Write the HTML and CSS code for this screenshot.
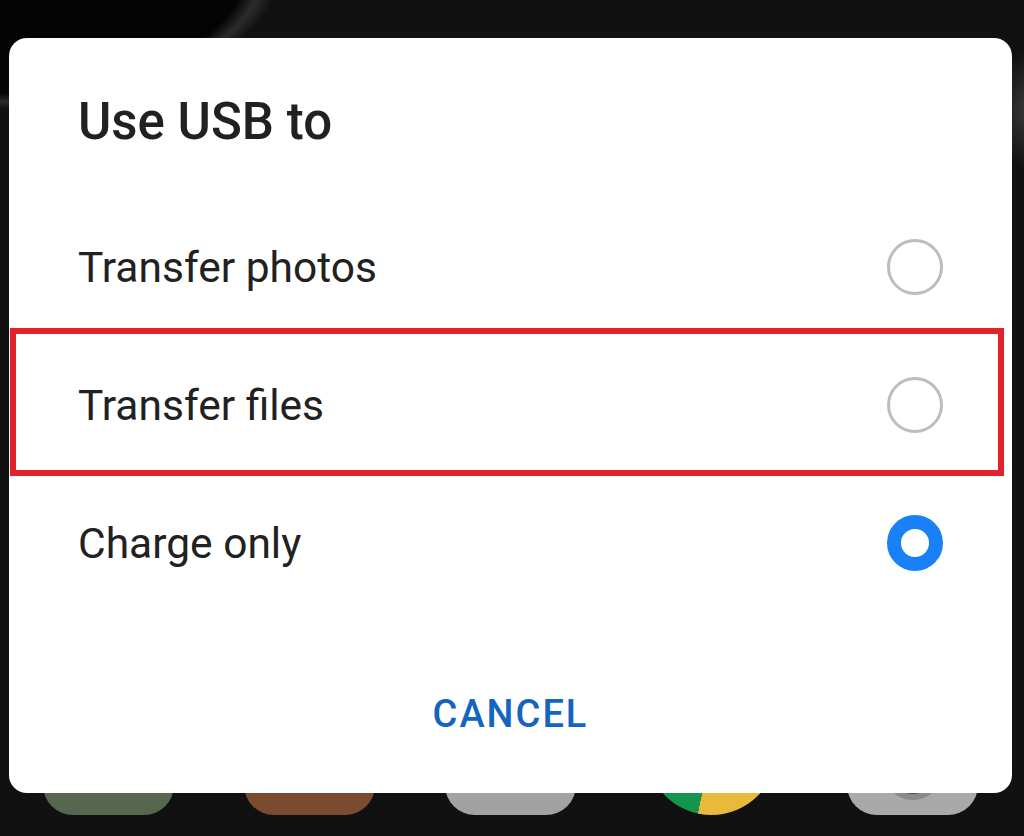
FILE: index.html
```html
<!DOCTYPE html>
<html lang="en">

<head>
    <meta charset="UTF-8">
    <meta name="viewport" content="width=device-width, initial-scale=1.0">
    <title>Use USB to</title>
    <link rel="stylesheet" href="styles.css">
</head>

<body>
    <main class="screen">
        <section class="dialog">
            <h1 class="dialog-title">Use USB to</h1>
            <ul class="options">
                <li class="option"><span>Transfer photos</span><span class="radio"></span></li>
                <li class="option"><span>Transfer files</span><span class="radio"></span></li>
                <li class="option"><span>Charge only</span><span class="radio checked"></span></li>
            </ul>
            <div class="actions">
                <button class="btn-cancel">CANCEL</button>
            </div>
            <div class="highlight"></div>
        </section>

        <div class="dock">
            <span class="app app-green"></span>
            <span class="app app-brown"></span>
            <span class="app app-gray"></span>
            <span class="app app-chrome"></span>
            <span class="app app-camera"><span class="lens"></span></span>
        </div>
    </main>
</body>

</html>
```

FILE: styles.css
```css
* {
    list-style-type: none;
    box-sizing: border-box;
    margin: 0;
    padding: 0;
}

html,
body {
    height: 100%;
}

body {
    overflow: hidden;
    padding: 38px 12px 0 9px;
    font-family: Roboto, "Liberation Sans", sans-serif;
    background:
        radial-gradient(ellipse 290px 140px at -10px -30px, #040404 0 88%, #2c2c2c 94%, rgba(17, 17, 17, 0) 100%),
        radial-gradient(ellipse 40px 60px at 1030px 110px, #3a3a3a 0, rgba(17, 17, 17, 0) 100%),
        #111;
}

.dialog {
    position: relative;
    z-index: 1;
    width: 1003px;
    height: 755px;
    padding: 54px 69px 0;
    background: #fff;
    border-radius: 18px;
}

.dialog-title {
    margin-bottom: 46px;
    font-size: 51px;
    font-weight: 500;
    line-height: 60px;
    color: #212121;
}

.option {
    display: flex;
    align-items: center;
    justify-content: space-between;
    height: 138px;
    font-size: 42.5px;
    color: #212121;
}

.radio {
    width: 56px;
    height: 56px;
    border: 3px solid #bdbdbd;
    border-radius: 50%;
}

.radio.checked {
    border: 14px solid #1a80f5;
}

.actions {
    padding-top: 80px;
    text-align: center;
}

.btn-cancel {
    border: 0;
    background: none;
    font-family: Roboto, "Liberation Sans", sans-serif;
    font-size: 38px;
    font-weight: 500;
    line-height: 44px;
    letter-spacing: 2px;
    color: #1565c0;
}

.highlight {
    position: absolute;
    left: 1px;
    top: 290px;
    width: 994px;
    height: 148px;
    border: 6px solid #e3212b;
}

.dock {
    display: flex;
    gap: 70px;
    margin-top: -109px;
    padding-left: 34px;
}

.app {
    position: relative;
    width: 131px;
    height: 131px;
    border-radius: 30px;
}

.app-green {
    background: #56664f;
}

.app-brown {
    background: #7a4a31;
}

.app-gray {
    background: #a2a2a2;
}

.app-chrome {
    border-radius: 50%;
    background: conic-gradient(#d93a2f 0 70deg, #e8b93a 70deg 192deg, #14944c 192deg 300deg, #d93a2f 300deg);
}

.app-camera {
    background: #a9a9a9;
}

.lens {
    position: absolute;
    left: 36px;
    top: 56px;
    width: 60px;
    height: 60px;
    border: 6px solid #8a8a8a;
    border-radius: 50%;
    background: #4a4a4a;
}
```
